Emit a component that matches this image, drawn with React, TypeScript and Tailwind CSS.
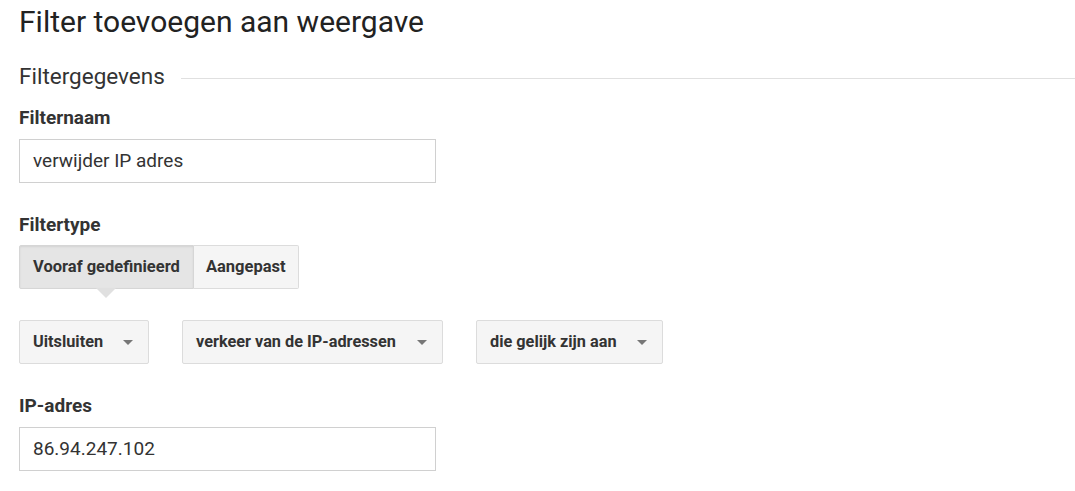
import React from 'react';

const Caret: React.FC = () => (
  <svg width="10" height="5" viewBox="0 0 10 5" className="shrink-0">
    <path d="M0 0h10L5 5z" fill="#777" />
  </svg>
);

const Dropdown: React.FC<{ label: string; width: string }> = ({ label, width }) => (
  <button className={`${width} h-[44px] flex items-center justify-between pl-[13px] pr-[15px] bg-[#f5f5f5] border border-[#dcdcdc] rounded-[2px] text-[16.3px] font-bold text-[#333]`}>
    <span>{label}</span>
    <Caret />
  </button>
);

const App: React.FC = () => {
  return (
    <div className="w-[1075px] h-[491px] bg-white overflow-hidden pl-[19px] pt-[4px] font-['Roboto','Liberation_Sans',sans-serif]">
      <h1 className="text-[30px] leading-[36px] text-[#222] font-normal">Filter toevoegen aan weergave</h1>

      <div className="mt-[23px] flex items-center gap-[16px]">
        <h2 className="text-[22.5px] leading-[26px] text-[#333] font-normal whitespace-nowrap">Filtergegevens</h2>
        <div className="flex-1 h-px bg-[#e0e0e0] mt-[4px]" />
      </div>

      <label className="block mt-[18px] text-[19px] leading-[22px] font-bold text-[#333]">Filternaam</label>
      <div className="mt-[10px] w-[417px] h-[44px] border border-[#d0d0d0] flex items-center pl-[13px] text-[19px] text-[#333]">
        verwijder IP adres
      </div>

      <label className="block mt-[31px] text-[19px] leading-[22px] font-bold text-[#333]">Filtertype</label>
      <div className="mt-[9px] flex">
        <div className="relative">
          <button className="h-[44px] px-[13px] bg-[#e5e5e5] border border-[#d6d6d6] rounded-l-[2px] text-[16.5px] font-bold text-[#333] shadow-[inset_0_1px_2px_rgba(0,0,0,0.08)]">
            Vooraf gedefinieerd
          </button>
          <svg width="20" height="10" viewBox="0 0 20 10" className="absolute left-[77px] top-[43px]">
            <path d="M0 0h20L10 10z" fill="#e0e0e0" />
          </svg>
        </div>
        <button className="h-[44px] px-[12px] bg-[#f5f5f5] border border-l-0 border-[#dcdcdc] rounded-r-[2px] text-[16.5px] font-bold text-[#333]">
          Aangepast
        </button>
      </div>

      <div className="mt-[31px] flex gap-[33px]">
        <Dropdown label="Uitsluiten" width="w-[130px]" />
        <Dropdown label="verkeer van de IP-adressen" width="w-[261px]" />
        <Dropdown label="die gelijk zijn aan" width="w-[187px]" />
      </div>

      <label className="block mt-[31px] text-[19px] leading-[22px] font-bold text-[#333]">IP-adres</label>
      <div className="mt-[10px] w-[417px] h-[44px] border border-[#d0d0d0] flex items-center pl-[13px] text-[19px] text-[#333]">
        86.94.247.102
      </div>
    </div>
  );
};

export default App;
